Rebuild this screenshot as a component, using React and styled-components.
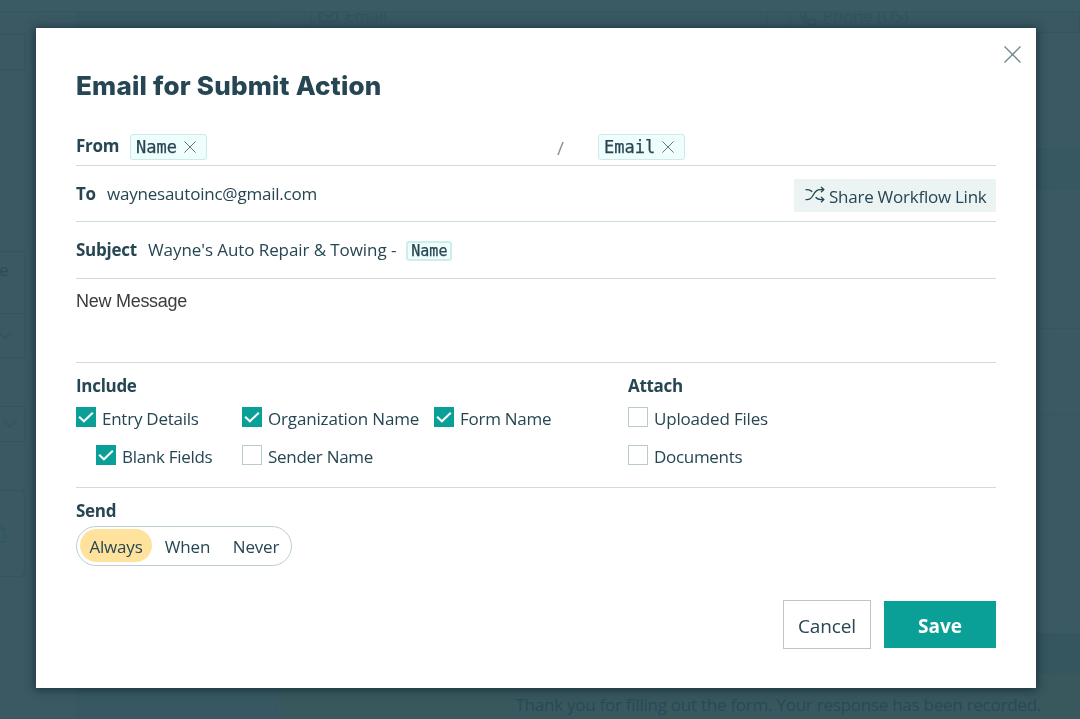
import React, { useState } from 'react'
import styled, { createGlobalStyle, css } from 'styled-components'

const ink = '#264653'
const teal = '#0aa098'
const line = '#cbdcda'
const ghost = '#34525d'

const GlobalStyle = createGlobalStyle`
* { box-sizing: border-box; }
body {
  margin: 0;
  overflow: hidden;
  font-family: 'Open Sans', 'Noto Sans', sans-serif;
  color: ${ink};
}
button { font-family: inherit; color: inherit; cursor: pointer; }
`

const CloseIcon = ({ size, stroke = '#6f858d', width = 1.2 }) => (
  <svg width={size} height={size} viewBox="0 0 16 16" fill="none" stroke={stroke} strokeWidth={width}>
    <path d="M0.5 0.5 15.5 15.5M15.5 0.5 0.5 15.5" />
  </svg>
)

const CheckIcon = () => (
  <svg width="20" height="20" viewBox="0 0 20 20" fill="none" stroke="#fff" strokeWidth="2.1">
    <path d="M3.1 9.8 7.9 14.3 16.8 5.7" />
  </svg>
)

const ShuffleIcon = () => (
  <svg width="20" height="18" viewBox="0 0 20 18" fill="none" stroke={ink} strokeWidth="1.3">
    <path d="M0.5 3.7H2C4 3.7 5.8 4.3 7.2 5.8M0.5 13.7H2C9.6 13.7 7.2 3.6 15 3.6H18.6M10.6 11.3C12 12.9 13.8 13.6 16 13.6H18.6" />
    <path d="M16 1 18.8 3.6 16 6.2M16 11 18.8 13.6 16 16.2" />
  </svg>
)

const Chevron = () => (
  <svg width="14" height="8" viewBox="0 0 14 8" fill="none" stroke={ghost} strokeWidth="1.3">
    <path d="M0.5 0.7 7 7 13.5 0.7" />
  </svg>
)

const Check = ({ label, defaultOn, nested, ls }) => {
  const [on, setOn] = useState(defaultOn)
  return (
    <CheckRow $nested={nested} $ls={ls} onClick={() => setOn(!on)}>
      <Box $on={on}>{on && <CheckIcon />}</Box>
      {label}
    </CheckRow>
  )
}

const Backdrop = () => (
  <Page>
    <TopBar />
    <Columns>
      <Side>
        <SideBox $h={36} $mt={22} />
        <SideBox $h={107} $mt={181}>
          <SideLabel>e</SideLabel>
          <SideSelect><Chevron /></SideSelect>
        </SideBox>
        <SideBox $h={36} $mt={48}>
          <SideSelect $plain><Chevron /></SideSelect>
        </SideBox>
        <SideBox $h={87} $mt={48} $round>
          <svg width="8" height="20" viewBox="0 0 8 20" fill="none" stroke="#2b5a62" strokeWidth="1.4">
            <path d="M0 5H6M0 1.5H1.5V5M4.5 5V18H0" />
          </svg>
        </SideBox>
      </Side>
      <Gutter />
      <Canvas>
        <Fields>
          <Field $w={457} $ls={-0.3}>
            <svg width="20" height="15" viewBox="0 0 20 15" fill="none" stroke={ghost} strokeWidth="1.6">
              <rect x="1" y="1" width="17" height="12.5" rx="1.5" />
              <path d="M1 3 9.5 9 18 3" />
            </svg>
            Email
          </Field>
          <Field $w={290} $ls={-0.2}>
            <svg width="19" height="19" viewBox="0 0 24 24" fill="none" stroke={ghost} strokeWidth="2">
              <path d="M22 16.9v3a2 2 0 0 1-2.2 2 19.8 19.8 0 0 1-8.6-3.1 19.5 19.5 0 0 1-6-6A19.8 19.8 0 0 1 2.1 4.2 2 2 0 0 1 4.1 2h3a2 2 0 0 1 2 1.7c.1 1 .4 1.9.7 2.8a2 2 0 0 1-.5 2.1L8.1 9.9a16 16 0 0 0 6 6l1.3-1.3a2 2 0 0 1 2.1-.4c.9.3 1.8.6 2.8.7a2 2 0 0 1 1.7 2z" />
            </svg>
            Phone (US)
          </Field>
        </Fields>
        <Band $h={116} />
        <Band $h={40} $shade="#375761" />
        <Band $h={140} />
        <Band $h={86} />
        <Band $h={219} />
        <Band $h={40} $shade="#35555f" />
        <Thanks>Thank you for filling out the form. Your response has been recorded.</Thanks>
      </Canvas>
    </Columns>
  </Page>
)

const App = () => {
  const [send, setSend] = useState('Always')

  return (
    <>
      <GlobalStyle />
      <Backdrop />
      <Overlay>
        <Modal>
          <CloseBtn><CloseIcon size={17} width={1.2} /></CloseBtn>
          <Title>Email for Submit Action</Title>

          <FromRow>
            <Label $w={54} $up>From</Label>
            <Sender>
              <Chip>Name<CloseIcon size={12} stroke="#4f6974" /></Chip>
            </Sender>
            <Slash>/</Slash>
            <Chip>Email<CloseIcon size={12} stroke="#4f6974" /></Chip>
          </FromRow>

          <ToRow>
            <Label $w={31}>To</Label>
            <Value $ls={-0.22}>waynesautoinc@gmail.com</Value>
            <ShareBtn><ShuffleIcon />Share Workflow Link</ShareBtn>
          </ToRow>

          <SubjectRow>
            <Label $w={72}>Subject</Label>
            <Value $ls={-0.08}>Wayne's Auto Repair &amp; Towing -</Value>
            <MiniChip>Name</MiniChip>
          </SubjectRow>

          <Message>New Message</Message>

          <Options>
            <Group>
              <Heading>Include</Heading>
              <IncludeGrid>
                <Check label="Entry Details" ls={-0.25} defaultOn />
                <Check label="Organization Name" ls={-0.16} defaultOn />
                <Check label="Form Name" ls={-0.27} defaultOn />
                <Check label="Blank Fields" ls={-0.3} defaultOn nested />
                <Check label="Sender Name" ls={-0.28} />
              </IncludeGrid>
            </Group>
            <Group>
              <Heading>Attach</Heading>
              <AttachGrid>
                <Check label="Uploaded Files" ls={-0.18} />
                <Check label="Documents" ls={-0.3} />
              </AttachGrid>
            </Group>
          </Options>

          <SendSection>
            <Heading>Send</Heading>
            <Pills>
              {[['Always', 72], ['When', 71], ['Never', 66]].map(([name, w]) => (
                <Pill key={name} $w={w} $active={send === name} onClick={() => setSend(name)}>{name}</Pill>
              ))}
            </Pills>
          </SendSection>

          <Footer>
            <CancelBtn>Cancel</CancelBtn>
            <SaveBtn>Save</SaveBtn>
          </Footer>
        </Modal>
      </Overlay>
    </>
  )
}

const Page = styled.div`
  height: 719px;
  display: flex;
  flex-direction: column;
  background: #3b5963;
  overflow: hidden;
`
const TopBar = styled.div`
  height: 12px;
  flex: none;
  background: #3a5a64;
  border-bottom: 1px solid #37555f;
`
const Columns = styled.div`
  display: flex;
  flex: 1;
  min-height: 0;
`
const Side = styled.div`
  width: 76px;
  flex: none;
`
const SideBox = styled.div`
  width: 25px;
  height: ${p => p.$h}px;
  margin-top: ${p => p.$mt}px;
  border: 1px solid #36535e;
  border-left: none;
  ${p => p.$round && css`
    border-radius: 0 5px 5px 0;
    padding-top: 33px;
  `}
`
const SideLabel = styled.div`
  height: 62px;
  line-height: 36px;
  font-size: 17px;
  text-indent: -1px;
  color: #2e4c58;
  border-bottom: 1px solid #36535e;
`
const SideSelect = styled.div`
  height: ${p => (p.$plain ? 34 : 42)}px;
  display: flex;
  align-items: center;
  margin-left: ${p => (p.$plain ? 3 : -2)}px;
`
const Gutter = styled.div`
  width: 204px;
  flex: none;
  background: #375862;
  border-right: 1px solid #3a5963;
`
const Canvas = styled.div`
  flex: 1;
  min-width: 0;
  display: flex;
  flex-direction: column;
`
const Fields = styled.div`
  display: flex;
  gap: 22px;
  height: 21px;
  padding-left: 31px;
  background: #395862;
  border-bottom: 1px solid #36545f;
  overflow: hidden;
`
const Field = styled.div`
  width: ${p => p.$w}px;
  height: 21px;
  flex: none;
  display: flex;
  gap: 6px;
  padding-left: 7px;
  line-height: 8px;
  font-size: 17px;
  letter-spacing: ${p => p.$ls}px;
  color: ${ghost};
  border-left: 1px solid #36545f;
  border-right: 1px solid #36545f;
  svg { margin-top: -4px; }
`
const Band = styled.div`
  height: ${p => p.$h}px;
  flex: none;
  background: ${p => p.$shade || '#3b5963'};
  border-bottom: 1px solid #375660;
`
const Thanks = styled.div`
  flex: 1;
  padding: 19px 39px 0 0;
  line-height: 24px;
  font-size: 17px;
  letter-spacing: -0.25px;
  text-align: right;
  white-space: nowrap;
  color: #264a59;
  background: #38585e;
`
const Overlay = styled.div`
  position: fixed;
  inset: 0;
  padding: 28px 36px;
`
const Modal = styled.div`
  position: relative;
  width: 1000px;
  height: 660px;
  padding: 40px;
  background: #fff;
  box-shadow: 0 1px 9px 1px rgba(12, 36, 45, 0.7);
`
const CloseBtn = styled.button`
  position: absolute;
  top: 17px;
  right: 14px;
  width: 18px;
  height: 18px;
  padding: 0;
  border: none;
  background: none;
  svg { display: block; }
`
const Title = styled.h1`
  margin: 0;
  height: 60px;
  line-height: 36px;
  font-family: Inter, Lato, sans-serif;
  font-size: 26px;
  font-weight: 800;
  letter-spacing: 0.22px;
  white-space: nowrap;
`
const rowBase = css`
  display: flex;
  align-items: flex-start;
  border-bottom: 1px solid ${line};
  white-space: nowrap;
`
const FromRow = styled.div`
  ${rowBase}
  height: 38px;
  padding-top: 6px;
`
const ToRow = styled.div`
  ${rowBase}
  height: 56px;
  padding-top: 13px;
`
const SubjectRow = styled.div`
  ${rowBase}
  height: 57px;
  padding-top: 13px;
`
const Label = styled.span`
  width: ${p => p.$w}px;
  flex: none;
  line-height: 30px;
  margin-top: ${p => (p.$up ? -3 : 0)}px;
  font-size: 17px;
  font-weight: 700;
  letter-spacing: -0.25px;
`
const Value = styled.span`
  line-height: 30px;
  font-size: 17px;
  letter-spacing: ${p => p.$ls}px;
`
const Sender = styled.div`
  width: 427px;
  flex: none;
  display: flex;
`
const Slash = styled.span`
  width: 41px;
  flex: none;
  line-height: 28px;
  font-size: 19px;
  color: #84958f;
`
const Chip = styled.span`
  display: flex;
  align-items: center;
  gap: 7px;
  height: 26px;
  padding: 0 10px 0 5px;
  font-family: 'DejaVu Sans Mono', monospace;
  font-size: 17px;
  -webkit-text-stroke: 0.25px ${ink};
  background: #effdfd;
  border: 1px solid #c9ecea;
  border-radius: 3px;
`
const MiniChip = styled.span`
  height: 20px;
  margin: 6px 0 0 10px;
  padding: 0 3px;
  line-height: 16px;
  font-family: 'DejaVu Sans Mono', monospace;
  font-size: 15px;
  -webkit-text-stroke: 0.25px ${ink};
  background: #effdfd;
  border: 2px solid #cdefec;
  border-radius: 3px;
`
const ShareBtn = styled.button`
  display: flex;
  align-items: center;
  gap: 4px;
  width: 202px;
  height: 33px;
  margin-left: auto;
  padding: 1px 0 0 11px;
  font-size: 17px;
  letter-spacing: -0.25px;
  white-space: nowrap;
  background: #ebf4f3;
  border: none;
  svg { margin-top: -2px; }
`
const Message = styled.div`
  height: 84px;
  padding-top: 10px;
  line-height: 24px;
  font-family: 'Liberation Sans', Arial, sans-serif;
  font-size: 18px;
  letter-spacing: -0.27px;
  color: #3c3c3c;
  border-bottom: 1px solid ${line};
`
const Options = styled.div`
  display: grid;
  grid-template-columns: 552px 1fr;
  height: 125px;
  padding-top: 11px;
  border-bottom: 1px solid ${line};
`
const Group = styled.div``
const Heading = styled.div`
  line-height: 24px;
  font-size: 17px;
  font-weight: 700;
  letter-spacing: -0.3px;
`
const IncludeGrid = styled.div`
  display: grid;
  grid-template-columns: 166px 192px auto;
  grid-auto-rows: 38px;
  padding-top: 1px;
`
const AttachGrid = styled(IncludeGrid)`
  grid-template-columns: auto;
`
const CheckRow = styled.div`
  display: flex;
  gap: 6px;
  height: 38px;
  padding-top: 8px;
  padding-left: ${p => (p.$nested ? 20 : 0)}px;
  line-height: 24px;
  font-size: 17px;
  letter-spacing: ${p => p.$ls || 0}px;
  white-space: nowrap;
  cursor: pointer;
`
const Box = styled.span`
  width: 20px;
  height: 20px;
  flex: none;
  background: ${p => (p.$on ? teal : '#fff')};
  border: ${p => (p.$on ? 'none' : '1px solid #b9cbc9')};
  svg { display: block; }
`
const SendSection = styled.div`
  padding-top: 11px;
`
const Pills = styled.div`
  display: flex;
  width: 216px;
  height: 40px;
  margin-top: 3px;
  padding: 2px 3px;
  border: 1px solid #bccfcc;
  border-radius: 20px;
`
const Pill = styled.button`
  width: ${p => p.$w}px;
  height: 33px;
  padding: 2px 0 0;
  flex: none;
  text-align: center;
  font-size: 17px;
  letter-spacing: -0.2px;
  border: none;
  border-radius: 17px;
  background: ${p => (p.$active ? '#ffe39c' : 'none')};
`
const Footer = styled.div`
  display: flex;
  align-items: center;
  justify-content: flex-end;
  gap: 13px;
  margin-top: 34px;
`
const CancelBtn = styled.button`
  width: 88px;
  height: 49px;
  padding: 3px 0 0;
  font-size: 19px;
  letter-spacing: -0.1px;
  background: #fff;
  border: 1px solid #b9c6cb;
`
const SaveBtn = styled.button`
  width: 112px;
  height: 47px;
  padding: 3px 0 0;
  font-size: 19px;
  font-weight: 700;
  color: #fff;
  background: ${teal};
  border: none;
`

export default App
